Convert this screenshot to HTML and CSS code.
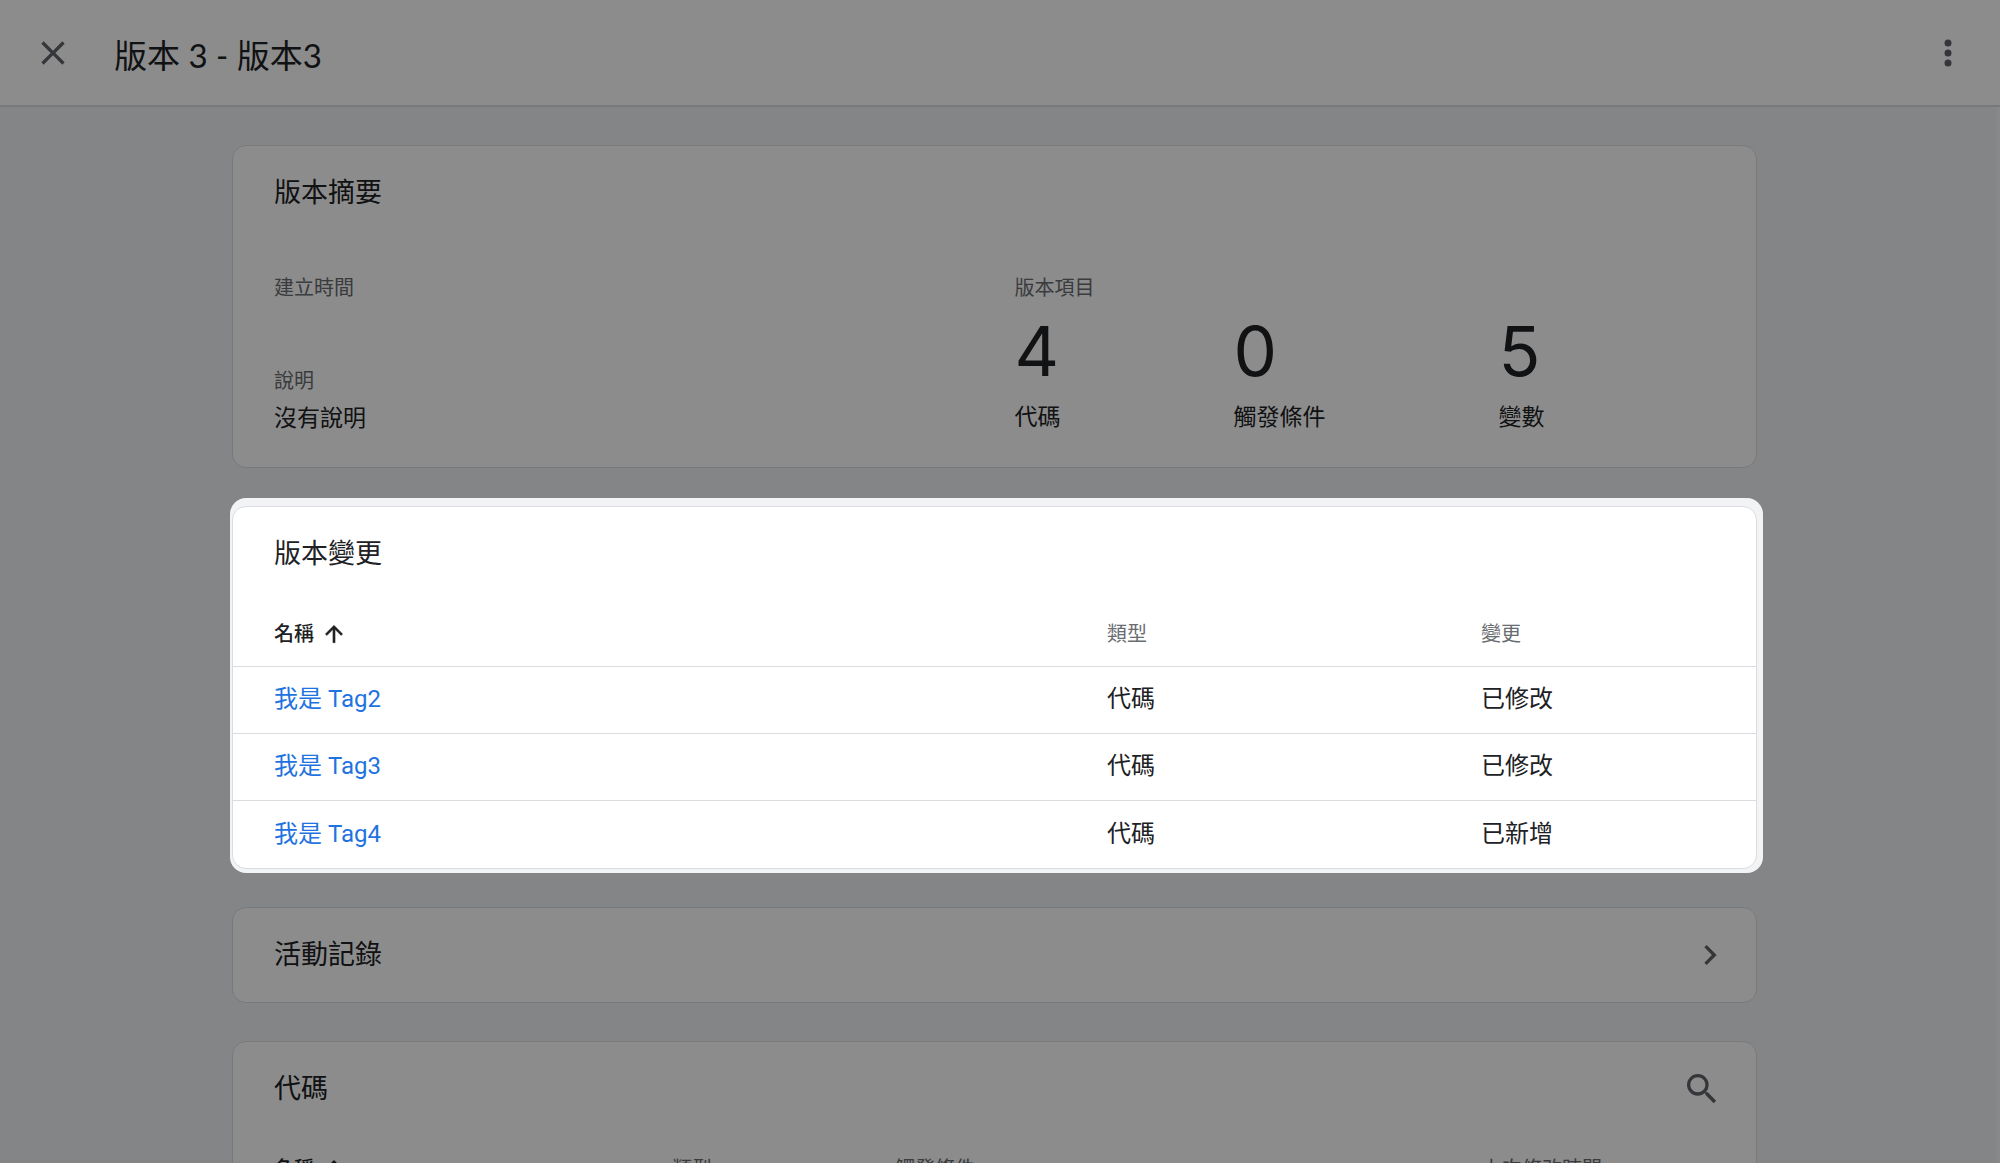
FILE: index.html
```html
<!DOCTYPE html>
<html lang="zh-Hant">
<head>
<meta charset="utf-8">
<meta name="viewport" content="width=device-width, initial-scale=1">
<title>版本 3 - 版本3</title>
<link rel="stylesheet" href="styles.css">
</head>
<body>
<header class="topbar">
  <button class="icon-button" type="button" aria-label="關閉">
    <svg class="icon" viewBox="0 0 24 24"><path d="M19 6.41 17.59 5 12 10.59 6.41 5 5 6.41 10.59 12 5 17.59 6.41 19 12 13.41 17.59 19 19 17.59 13.41 12z"/></svg>
  </button>
  <h1 class="page-title">版本 3 - 版本3</h1>
  <button class="icon-button" type="button" aria-label="更多">
    <svg class="icon" viewBox="0 0 24 24"><circle cx="12" cy="6" r="2.1"/><circle cx="12" cy="12" r="2.1"/><circle cx="12" cy="18" r="2.1"/></svg>
  </button>
</header>

<main class="content">
  <section class="card">
    <div class="card-header"><h2 class="card-title">版本摘要</h2></div>
    <div class="summary">
      <dl class="details">
        <div class="detail">
          <dt class="label">建立時間</dt>
          <dd class="value"></dd>
        </div>
        <div class="detail">
          <dt class="label">說明</dt>
          <dd class="value">沒有說明</dd>
        </div>
      </dl>
      <div class="items">
        <h3 class="label">版本項目</h3>
        <ul class="counts">
          <li class="count"><span class="count-number">4</span><span class="value">代碼</span></li>
          <li class="count"><span class="count-number">0</span><span class="value">觸發條件</span></li>
          <li class="count"><span class="count-number">5</span><span class="value">變數</span></li>
        </ul>
      </div>
    </div>
  </section>

  <section class="card spotlight">
    <div class="card-header"><h2 class="card-title">版本變更</h2></div>
    <table class="table">
      <colgroup><col><col class="col-type"><col class="col-change"></colgroup>
      <thead>
        <tr>
          <th class="sorted" scope="col"><span class="sort">名稱<svg class="sort-icon" viewBox="0 0 24 24"><path d="m4 12 1.41 1.41L11 7.83V20h2V7.83l5.58 5.59L20 12l-8-8z"/></svg></span></th>
          <th scope="col">類型</th>
          <th scope="col">變更</th>
        </tr>
      </thead>
      <tbody>
        <tr><td><a class="link" href="#tag2">我是 Tag2</a></td><td>代碼</td><td>已修改</td></tr>
        <tr><td><a class="link" href="#tag3">我是 Tag3</a></td><td>代碼</td><td>已修改</td></tr>
        <tr><td><a class="link" href="#tag4">我是 Tag4</a></td><td>代碼</td><td>已新增</td></tr>
      </tbody>
    </table>
  </section>

  <section class="card">
    <div class="card-header card-header-toggle">
      <h2 class="card-title">活動記錄</h2>
      <button class="icon-button" type="button" aria-label="展開活動記錄">
        <svg class="icon" viewBox="0 0 24 24"><path d="M10 6 8.59 7.41 13.17 12l-4.58 4.59L10 18l6-6z"/></svg>
      </button>
    </div>
  </section>

  <section class="card">
    <div class="card-header">
      <h2 class="card-title">代碼</h2>
      <button class="icon-button" type="button" aria-label="搜尋">
        <svg class="icon" viewBox="0 0 24 24"><path d="M15.5 14h-.79l-.28-.27A6.47 6.47 0 0 0 16 9.5 6.5 6.5 0 1 0 9.5 16c1.61 0 3.09-.59 4.23-1.57l.27.28v.79l5 4.99L20.49 19zm-6 0C7.01 14 5 11.99 5 9.5S7.01 5 9.5 5 14 7.01 14 9.5 11.99 14 9.5 14z"/></svg>
      </button>
    </div>
    <table class="table">
      <colgroup><col><col class="col-tag-type"><col class="col-trigger"><col class="col-modified"></colgroup>
      <thead>
        <tr>
          <th class="sorted" scope="col"><span class="sort">名稱<svg class="sort-icon" viewBox="0 0 24 24"><path d="m4 12 1.41 1.41L11 7.83V20h2V7.83l5.58 5.59L20 12l-8-8z"/></svg></span></th>
          <th scope="col">類型</th>
          <th scope="col">觸發條件</th>
          <th scope="col">上次修改時間</th>
        </tr>
      </thead>
    </table>
  </section>
</main>
</body>
</html>
```
FILE: styles.css
```css
:root {
  --ink: #202124;
  --icon: #5f6368;
  --muted: #696c70;
  --line: #dadce0;
  --page: #f1f3f4;
  --link: #1f73e0;
}

* {
  box-sizing: border-box;
}

body {
  display: flex;
  flex-direction: column;
  height: 100vh;
  margin: 0;
  overflow: hidden;
  background: var(--page);
  color: var(--ink);
  font-family: Roboto, "Noto Sans CJK TC", sans-serif;
  font-size: 24px;
  line-height: 32px;
}

h1, h2, h3, dl, dd, ul {
  margin: 0;
  padding: 0;
  font-weight: 400;
}

/* Top bar */
.topbar {
  display: flex;
  flex: none;
  align-items: center;
  height: 107px;
  padding: 0 32px 0 33px;
  border-bottom: 2px solid var(--line);
  background: #fff;
}

.page-title {
  flex: 1;
  padding: 4px 0 0 41px;
  font-family: Lato, "Noto Sans CJK TC", sans-serif;
  font-size: 33px;
  line-height: 44px;
}

.icon-button {
  display: flex;
  width: 40px;
  height: 40px;
  padding: 0;
  border: 0;
  background: none;
  color: var(--icon);
  cursor: pointer;
}

.icon {
  width: 40px;
  height: 40px;
  fill: currentColor;
}

/* Cards */
.content {
  display: flex;
  flex: 1;
  flex-direction: column;
  align-items: center;
  gap: 38px;
  min-height: 0;
  padding: 38px 8px 38px 0;
  border-right: 3px solid #fafafa;
}

.card {
  flex: none;
  width: 100%;
  max-width: 1525px;
  border: 1px solid var(--line);
  border-radius: 14px;
  background: #fff;
}

.card-header {
  display: flex;
  align-items: center;
  justify-content: space-between;
  height: 94px;
  padding: 0 34px 0 41px;
}

.card-header-toggle {
  padding-right: 26px;
}

.card-title {
  font-size: 27px;
  line-height: 36px;
}

/* The highlighted card sits above a dimmed page */
.spotlight {
  position: relative;
  z-index: 1;
}

.spotlight::before {
  content: "";
  position: absolute;
  z-index: -1;
  inset: -9px -7px -5px -3px;
  border-radius: 16px;
  background: var(--page);
  box-shadow: 0 0 0 3000px rgba(0, 0, 0, 0.45);
}

.spotlight::after {
  content: "";
  position: absolute;
  z-index: -1;
  inset: -1px;
  border: 1px solid var(--line);
  border-radius: 14px;
  background: #fff;
}

/* Summary */
.summary {
  display: grid;
  grid-template-columns: 1fr 1fr;
  gap: 40px;
  padding: 34px 41px 32px;
}

.detail {
  min-height: 93px;
}

.detail:last-child {
  min-height: 0;
}

.label {
  color: var(--muted);
  font-size: 20px;
  line-height: 28px;
}

.value {
  font-size: 23px;
}

.detail .value {
  padding-top: 8px;
}

.counts {
  display: flex;
  gap: 173px;
  list-style: none;
}

.count {
  display: flex;
  flex-direction: column;
  gap: 2px;
}

.count-number {
  font-family: Inter, sans-serif;
  font-size: 69px;
  line-height: 98px;
}

/* Tables */
.table {
  width: 100%;
  border-collapse: separate;
  border-spacing: 0;
  table-layout: fixed;
}

.col-type {
  width: 374px;
}

.col-change {
  width: 275px;
}

.col-tag-type {
  width: 223px;
}

.col-trigger {
  width: 587px;
}

.col-modified {
  width: 274px;
}

.table th,
.table td {
  height: 67px;
  padding: 0;
  border-bottom: 1px solid var(--line);
  text-align: left;
  vertical-align: middle;
}

.table td {
  padding-bottom: 2px;
}

.table th {
  height: 66px;
  color: var(--muted);
  font-size: 20px;
  font-weight: 400;
}

.table th:first-child,
.table td:first-child {
  padding-left: 41px;
}

.table tbody tr:last-child td {
  border-bottom: 0;
}

.table th.sorted {
  color: var(--ink);
  font-weight: 500;
}

.sort {
  display: flex;
  align-items: center;
  gap: 7px;
}

.sort-icon {
  width: 26px;
  height: 26px;
  fill: currentColor;
  stroke: currentColor;
  stroke-width: 0.4;
}

.link {
  color: var(--link);
  text-decoration: none;
}
```
